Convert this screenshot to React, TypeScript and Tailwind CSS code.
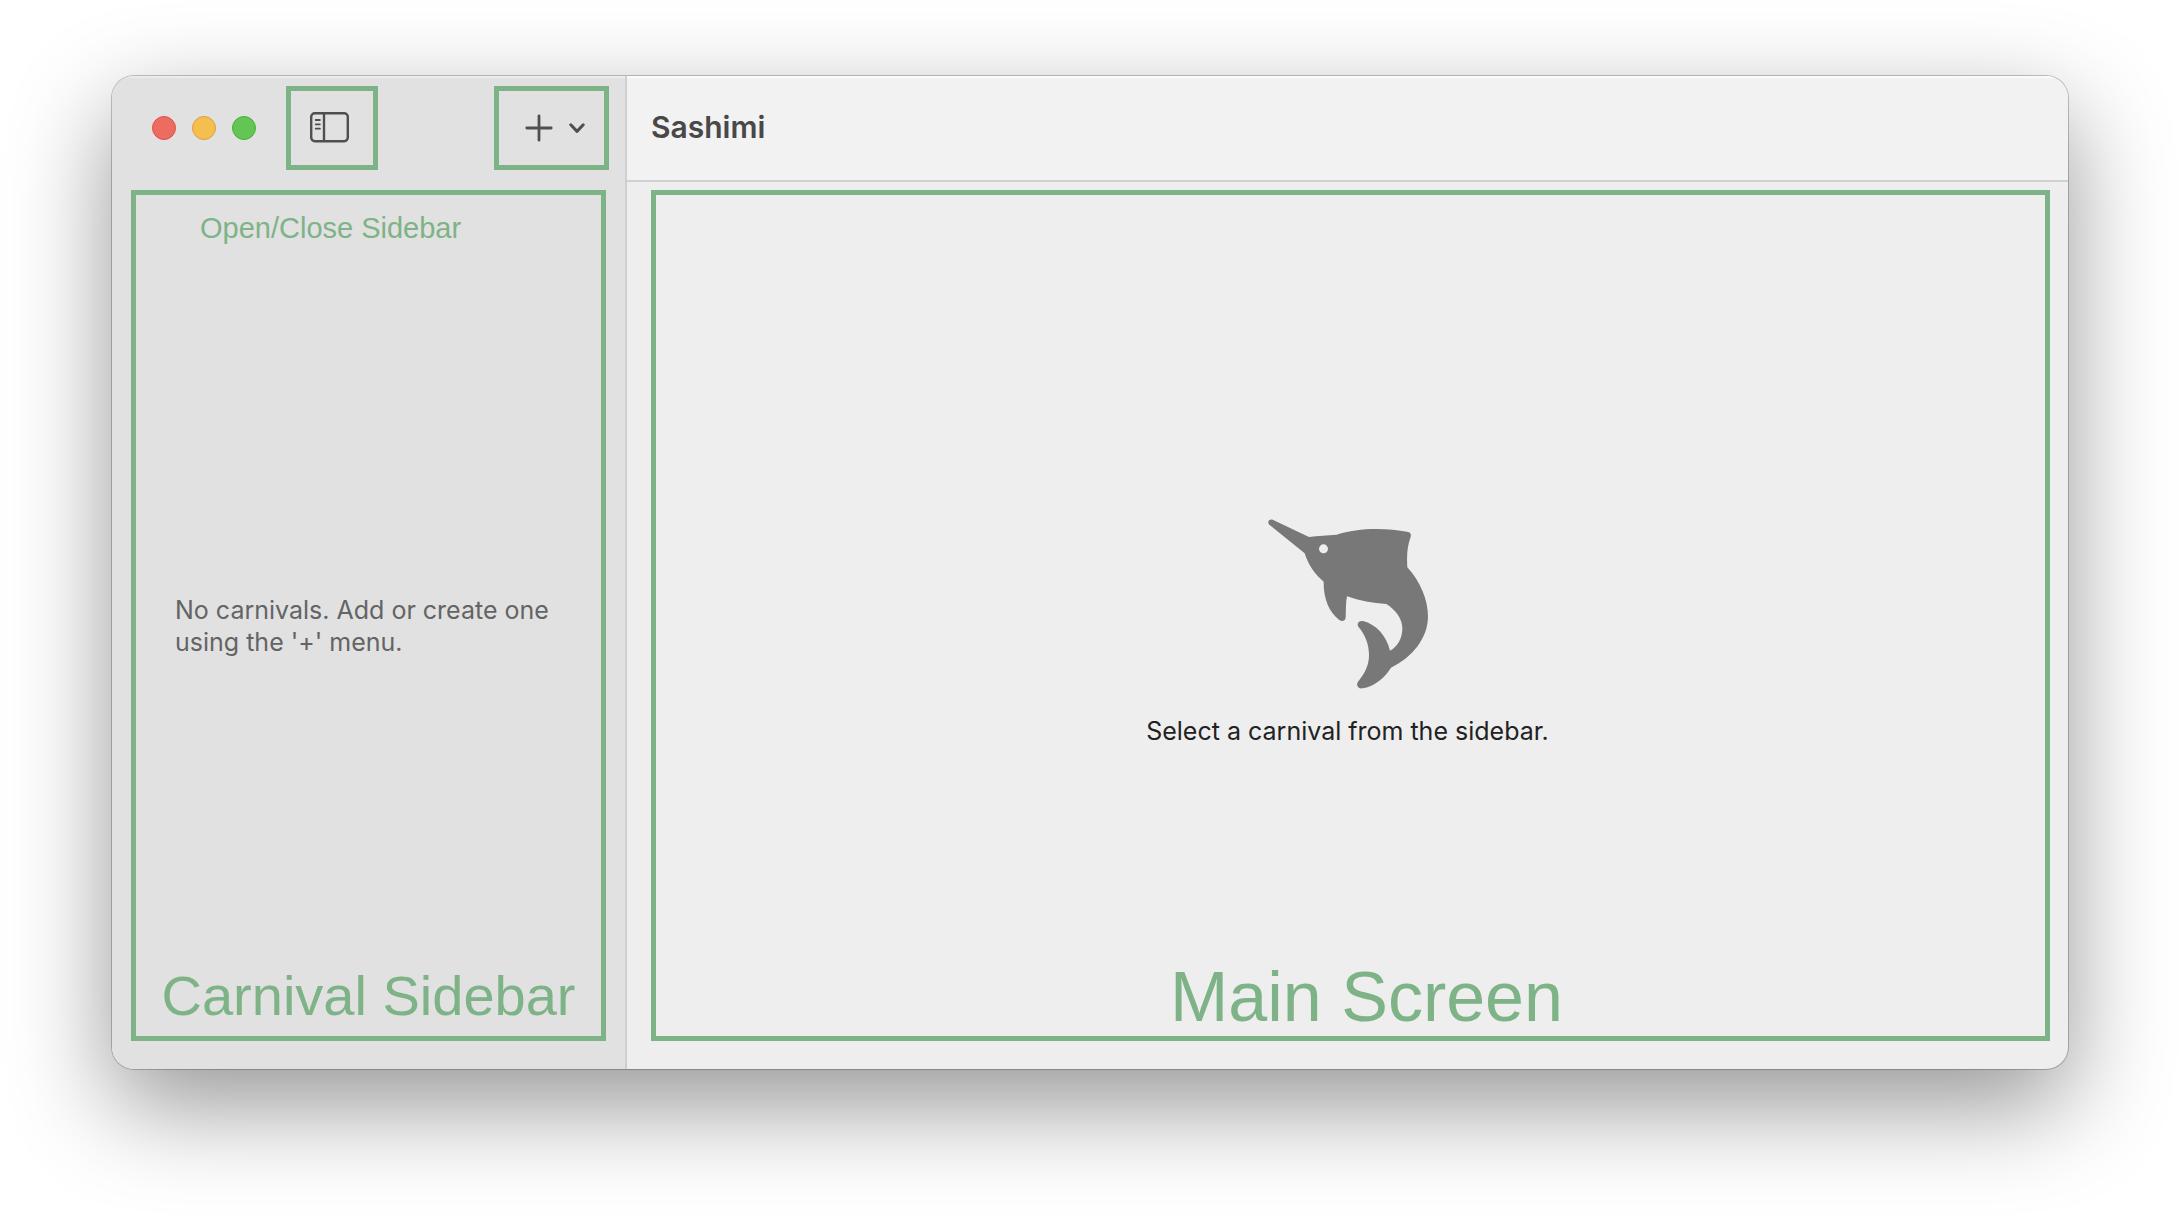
import React from "react";

const annotation = "border-[5px] border-[#7eb387]";
const annotationText = "font-['Liberation_Sans',Arial,sans-serif] text-[#7eb387] whitespace-nowrap";

function SidebarIcon() {
  return (
    <svg width="40" height="32" viewBox="0 0 40 32" fill="none" stroke="#4f4f4f" aria-hidden="true">
      <rect x="1.2" y="1.2" width="36.6" height="28" rx="3.6" strokeWidth="2.4" />
      <path d="M14 1.5V29" strokeWidth="2.4" />
      <path d="M5.7 8h4.2M5.7 12.3h4.2M5.7 16.7h4.2" strokeWidth="1.8" strokeLinecap="round" />
    </svg>
  );
}

function PlusIcon() {
  return (
    <svg width="28" height="28" viewBox="0 0 28 28" fill="none" stroke="#4f4f4f" strokeWidth="2.8" strokeLinecap="round" aria-hidden="true">
      <path d="M14 1.8v24.4M1.8 14h24.4" />
    </svg>
  );
}

function ChevronIcon() {
  return (
    <svg width="16" height="12" viewBox="0 0 16 12" fill="none" stroke="#4f4f4f" strokeWidth="3" strokeLinecap="round" strokeLinejoin="round" aria-hidden="true">
      <path d="M1.8 2.8 8 9.4l6.2-6.6" />
    </svg>
  );
}

function MarlinLogo() {
  return (
    <svg width="160" height="170" viewBox="84 54 480 510" fill="#787878" role="img" aria-label="Marlin">
      <path
        fillRule="evenodd"
        d="M98 56 L207 108 C235 104 262 103 290 101 C350 82 430 79 505 93 C511 95 514 100 512 107 C501 139 500 165 502 199 C541 242 564 296 564 347 C563 411 519 467 453 500 C432 534 401 556 368 562 C354 564 347 552 354 542 C375 516 387 493 387 462 C387 430 376 401 355 377 C349 367 357 358 369 360 C408 370 439 403 450 449 C474 438 487 410 487 382 C487 353 467 327 439 309 C399 307 358 299 321 286 C317 305 318 327 317 350 C316 360 305 362 298 357 C266 333 250 291 251 242 C225 221 204 190 194 157 L88 71 C80 63 88 53 98 56 Z M250.500 130 a13.500 13.500 0 1 0 0 27 a13.500 13.500 0 1 0 0 -27 Z"
      />
    </svg>
  );
}

export default function App() {
  return (
    <div className="flex min-h-screen flex-col bg-white px-28 pt-19 pb-[147px] font-[Inter,'Liberation_Sans',sans-serif]">
      <div className="flex flex-1 overflow-hidden rounded-[22px] bg-[#eeeeee] shadow-[0_0_0_1px_rgba(0,0,0,0.22),0_36px_100px_rgba(0,0,0,0.42)]">
        <aside className="flex w-[515px] shrink-0 flex-col border-r-2 border-[#cfcfcf] bg-[#e1e1e1] shadow-[inset_0_2px_0_#ebebeb]">
          <header className="flex h-[104px] shrink-0 items-center pr-4 pl-10">
            <div className="flex gap-4">
              <button aria-label="Close" className="size-6 rounded-full border border-[#d9534a] bg-[#ed6b5f]" />
              <button aria-label="Minimize" className="size-6 rounded-full border border-[#dba03c] bg-[#f5bf4f]" />
              <button aria-label="Zoom" className="size-6 rounded-full border border-[#4dab3c] bg-[#61c654]" />
            </div>
            <button aria-label="Toggle sidebar" className={`ml-[30px] flex h-[84px] w-[92px] items-center justify-center pr-1 ${annotation}`}>
              <SidebarIcon />
            </button>
            <button aria-label="Add carnival" className={`ml-auto flex h-[84px] w-[115px] items-center justify-center gap-4 pl-1.5 ${annotation}`}>
              <PlusIcon />
              <ChevronIcon />
            </button>
          </header>
          <section className={`mx-[19px] mt-2.5 mb-7 flex flex-1 flex-col ${annotation}`}>
            <p className={`mt-[15px] pl-16 text-[29px] leading-9 ${annotationText}`}>Open/Close Sidebar</p>
            <p className="my-auto px-[39px] pt-10 text-[25px] leading-8 whitespace-nowrap text-[#646464]">
              No carnivals. Add or create one
              <br />
              using the '+' menu.
            </p>
            <h2 className={`mb-2.5 text-center text-[56px] leading-[60px] ${annotationText}`}>Carnival Sidebar</h2>
          </section>
        </aside>
        <main className="flex min-w-0 flex-1 flex-col">
          <header className="flex h-[106px] shrink-0 items-center border-b-2 border-[#d0d0d0] bg-[#f2f2f2] px-6 pb-0.5 shadow-[inset_0_2px_0_#fafafa]">
            <h1 className="text-[30px] leading-9 font-semibold text-[#484848]">Sashimi</h1>
          </header>
          <section className={`mt-2 mr-[18px] mb-7 ml-6 flex flex-1 flex-col ${annotation}`}>
            <div className="flex flex-1 flex-col items-center justify-center gap-[26px] pt-28 pr-1.5">
              <MarlinLogo />
              <p className="text-[25px] leading-8 text-[#222222]">Select a carnival from the sidebar.</p>
            </div>
            <h2 className={`pl-8 text-center text-[70px] leading-[78px] ${annotationText}`}>Main Screen</h2>
          </section>
        </main>
      </div>
    </div>
  );
}
